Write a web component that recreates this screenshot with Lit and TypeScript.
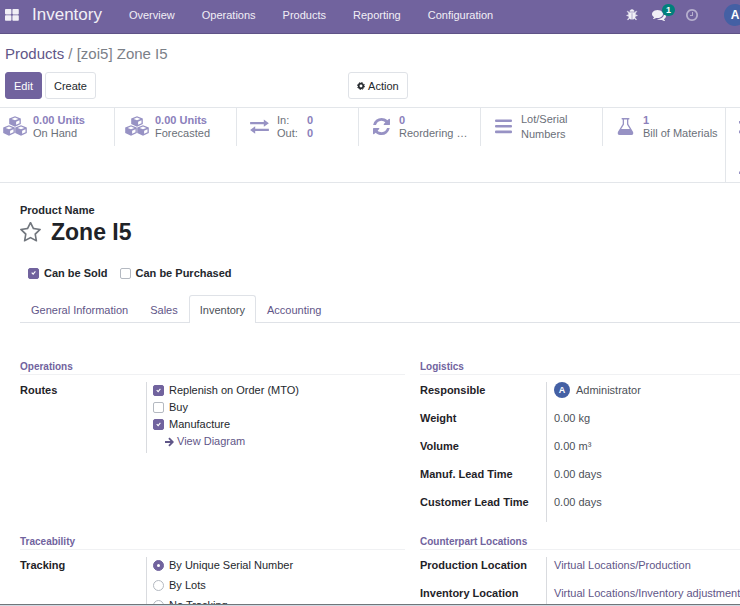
import { LitElement, html, css, svg, nothing } from "lit";
import { customElement, property, state } from "lit/decorators.js";

const icons = {
  bug: {
    box: "0 0 1792 1792",
    art: svg`<path d="M1696 960q0 26-19 45t-45 19h-224q0 171-67 290l208 209q19 19 19 45t-19 45q-18 19-45 19t-45-19l-198-197q-5 5-15 13t-42 28.5-65 36.5-82 29-97 13v-896h-128v896q-51 0-101.5-13.5t-87-33-66-39-43.5-32.5l-15-14-183 207q-20 21-48 21-24 0-43-16-19-18-20.5-44.5t15.5-46.5l202-227q-58-114-58-274h-224q-26 0-45-19t-19-45 19-45 45-19h224v-294l-173-173q-19-19-19-45t19-45 45-19 45 19l173 173h844l173-173q19-19 45-19t45 19 19 45-19 45l-173 173v294h224q26 0 45 19t19 45zm-480-576h-640q0-133 93.5-226.5t226.5-93.5 226.5 93.5 93.5 226.5z" stroke="currentColor" stroke-width="70"/>`,
  },
  chat: {
    box: "0 0 1792 1792",
    art: svg`<path d="M1408 768q0 139-94 257t-256.5 186.5-353.5 68.5q-86 0-176-16-124 88-278 128-36 9-86 16h-3q-11 0-20.5-8t-11.5-21q-1-3-1-6.5t.5-6.5 2-6l2.5-5 3.5-5.5 4-5 4.5-5 4-4.5q5-6 23-25t26-29.5 22.5-29 25-38.5 20.5-44q-124-72-195-177t-71-224q0-139 94-257t256.5-186.5 353.5-68.5 353.5 68.5 256.5 186.5 94 257zm384 256q0 120-71 224.5t-195 176.5q10 24 20.5 44t25 38.5 22.5 29 26 29.5 23 25q1 1 4 4.5t4.5 5 4 5 3.5 5.5l2.5 5 2 6 .5 6.5-1 6.5q-3 14-13 22t-22 7q-50-7-86-16-154-40-278-128-90 16-176 16-271 0-472-132 58 4 88 4 161 0 309-45t264-129q125-92 192-212t67-254q0-77-23-152 129 71 204 178t75 230z"/>`,
  },
  clock: {
    box: "128 128 1536 1536",
    art: svg`<path d="M1024 544v448q0 14-9 23t-23 9h-320q-14 0-23-9t-9-23v-64q0-14 9-23t23-9h224v-352q0-14 9-23t23-9h64q14 0 23 9t9 23zm416 352q0-148-73-273t-198-198-273-73-273 73-198 198-73 273 73 273 198 198 273 73 273-73 198-198 73-273zm224 0q0 209-103 385.5t-279.5 279.5-385.5 103-385.5-103-279.5-279.5-103-385.5 103-385.5 279.5-279.5 385.5-103 385.5 103 279.5 279.5 103 385.5z"/>`,
  },
  star: {
    box: "64 96 1664 1600",
    art: svg`<path d="M1201 1004l306-297-422-62-189-382-189 382-422 62 306 297-73 421 378-199 377 199zm527-357q0 22-26 48l-363 354 86 500q1 7 1 20 0 50-41 50-19 0-40-12l-449-236-449 236q-22 12-40 12-21 0-31.5-14.5t-10.5-35.5q0-6 2-20l86-500-364-354q-25-27-25-48 0-37 56-46l502-73 225-455q19-41 49-41t49 41l225 455 502 73q56 9 56 46z"/>`,
  },
  refresh: {
    box: "0 128 1536 1536",
    art: svg`<path d="M1511 1056q0 5-1 7-64 268-268 434.5t-478 166.5q-146 0-282.5-55t-243.5-157l-129 129q-19 19-45 19t-45-19-19-45v-448q0-26 19-45t45-19h448q26 0 45 19t19 45-19 45l-137 137q71 66 161 102t187 36q134 0 250-65t186-179q11-17 53-117 8-23 30-23h192q13 0 22.5 9.5t9.5 22.5zm25-800v448q0 26-19 45t-45 19h-448q-26 0-45-19t-19-45 19-45l138-138q-148-137-349-137-134 0-250 65t-186 179q-11 17-53 117-8 23-30 23h-199q-13 0-22.5-9.5t-9.5-22.5v-7q65-268 270-434.5t480-166.5q146 0 284 55.5t245 156.5l130-129q19-19 45-19t45 19 19 45z"/>`,
  },
  apps: {
    box: "0 0 14 12",
    art: svg`<rect width="6.4" height="5.4" rx=".8"/><rect x="7.4" width="6.4" height="5.4" rx=".8"/><rect y="6.3" width="6.4" height="5.4" rx=".8"/><rect x="7.4" y="6.3" width="6.4" height="5.4" rx=".8"/>`,
  },
  cubes: {
    box: "0 0 24 20",
    art: svg`${[[6.2, 0.2], [0.2, 9.2], [12.2, 9.2]].map(
      ([x, y]) => svg`<g transform="translate(${x} ${y})"><path fill-rule="evenodd" d="M5.8 0 L11.6 2.3 V7.9 L5.8 10.6 L0 7.9 V2.3 Z M5.8 1.3 L2.4 2.7 L5.8 4.1 L9.2 2.7 Z M6.9 5.5 V8.6 L10.3 7 V4 Z"/></g>`)}`,
  },
  exchange: {
    box: "0 0 20 16",
    art: svg`<path d="M0 3.1H14.6V0.4L20 4.4L14.6 8.2V5.7H0Z M20 10.3H5.4V7.8L0 11.8L5.4 15.6V12.9H20Z"/>`,
  },
  bars: {
    box: "0 0 17 15",
    art: svg`<rect y=".5" width="17" height="2.6" rx="1"/><rect y="6" width="17" height="2.6" rx="1"/><rect y="11.6" width="17" height="2.6" rx="1"/>`,
  },
  flask: {
    box: "0 0 16 17",
    art: svg`<path fill-rule="evenodd" d="M4.6 0H11.4Q12 .1 12 .7T11.4 1.4H10.8V6L15.6 14Q16.3 16.8 14 17H2Q-.3 16.8 .4 14L5.2 6V1.4H4.6Q4 1.3 4 .7T4.6 0Z M6.5 1.4V6.4L3.7 11H12.3L9.5 6.4V1.4Z"/>`,
  },
  cog: {
    box: "0 0 16 16",
    art: svg`<g fill="none" stroke="currentColor"><circle cx="8" cy="8" r="4.6" stroke-width="3.4"/><circle cx="8" cy="8" r="7" stroke-width="2" stroke-dasharray="2.75 2.75"/></g>`,
  },
  arrow: {
    box: "0 0 10 10",
    art: svg`<path fill="none" stroke="currentColor" stroke-width="2" d="M0 5H8.4M4.4 .8L8.6 5L4.4 9.2"/>`,
  },
  shuffle: {
    box: "0 0 18 60",
    art: svg`<path d="M0 5H18V7.6H0Z M0 14.6H18V17.2H0Z M0 56L4 52H18V58H0Z"/>`,
  },
};

type IconName = keyof typeof icons;

const icon = (name: IconName, cls = "") => html`<svg
  class="icon ${cls}" viewBox=${icons[name].box} fill="currentColor" aria-hidden="true"
>${icons[name].art}</svg>`;

const shared = css`
  * { box-sizing: border-box; }
  button { font: inherit; color: inherit; background: none; border: 0; padding: 0; cursor: pointer; }
  a { color: #5f5688; text-decoration: none; }
  .icon { display: block; flex: none; }
`;

@customElement("nav-bar")
export class NavBar extends LitElement {
  static styles = [shared, css`
    :host { display: block; }
    .bar {
      display: flex; align-items: center; height: 34px; padding: 0 5px 4px;
      background: #71639e; border-bottom: 1px solid #5f5387; color: #f1eff6; overflow: hidden;
    }
    .apps .icon { width: 14px; height: 12px; }
    .brand { margin: 0 27px 0 13px; font-size: 17px; line-height: 20px; color: #f1eff6; }
    .menu { display: flex; gap: 27px; }
    .menu a { color: #f1eff6; line-height: 16px; }
    .tray { display: flex; align-items: center; margin: 0 -11px 0 auto; flex: none; }
    .bug .icon { width: 12px; height: 12px; }
    .chat { position: relative; margin: 0 20px 0 14px; }
    .chat .icon { width: 14px; height: 14px; }
    .badge {
      position: absolute; left: 10px; top: -4px; min-width: 13px; height: 12px; border-radius: 6px;
      background: #00807b; color: #fff; font-size: 9px; font-weight: bold; line-height: 12px; text-align: center;
    }
    .clock .icon { width: 12px; height: 12px; opacity: 0.55; }
    .clock { margin-right: 26px; }
    .avatar {
      width: 22px; height: 22px; border-radius: 50%; background: #4460a4; color: #fff;
      font-size: 12px; font-weight: bold; line-height: 22px; text-align: center;
    }
  `];

  render() {
    return html`<header class="bar">
      <button class="apps" aria-label="Apps">${icon("apps")}</button>
      <a class="brand" href="#">Inventory</a>
      <nav class="menu">
        ${["Overview", "Operations", "Products", "Reporting", "Configuration"].map(
          (label) => html`<a href="#">${label}</a>`)}
      </nav>
      <div class="tray">
        <button class="bug" aria-label="Debug">${icon("bug")}</button>
        <button class="chat" aria-label="Messages">${icon("chat")}<span class="badge">1</span></button>
        <button class="clock" aria-label="Activities">${icon("clock")}</button>
        <button class="avatar">A</button>
      </div>
    </header>`;
  }
}

@customElement("stat-bar")
export class StatBar extends LitElement {
  static styles = [shared, css`
    :host { display: block; overflow: hidden; border: solid #e3e6ea; border-width: 1px 0; }
    .row { display: flex; height: 74px; margin-left: -7px; }
    .stat {
      display: flex; align-items: center; flex: 0 0 122px; height: 38px; padding-left: 10px;
      border-right: 1px solid #e3e6ea; color: #6b7079; text-align: left; line-height: 13px;
    }
    .stat:nth-child(6) { border-right: 0; }
    .pic { display: flex; justify-content: center; width: 24px; margin-right: 6px; padding-bottom: 2px; color: #9792c4; }
    .cubes { width: 24px; height: 20px; }
    .exchange { width: 19px; height: 15px; }
    .refresh, .flask { width: 17px; height: 17px; }
    .bars { width: 17px; height: 15px; }
    .num { display: block; font-weight: bold; color: #8b80bb; }
    .text { display: block; white-space: nowrap; }
    .tall { line-height: 15px; }
    .pair { display: grid; grid-template-columns: 30px auto; }
    .more { flex: 1 0 24px; display: flex; padding: 8px 0 0 13px; border-left: 1px solid #e3e6ea; color: #9792c4; }
    .shuffle { width: 18px; height: 60px; }
  `];

  private stat(name: IconName, body: unknown) {
    return html`<button class="stat"><span class="pic">${icon(name, name)}</span>${body}</button>`;
  }

  private text(num: string, label: string) {
    return html`<span class="text"><b class="num">${num}</b>${label}</span>`;
  }

  render() {
    return html`<div class="row">
      ${this.stat("cubes", this.text("0.00 Units", "On Hand"))}
      ${this.stat("cubes", this.text("0.00 Units", "Forecasted"))}
      ${this.stat("exchange", html`<span class="pair">
        <span>In:</span><b class="num">0</b><span>Out:</span><b class="num">0</b></span>`)}
      ${this.stat("refresh", this.text("0", "Reordering …"))}
      ${this.stat("bars", html`<span class="text tall">Lot/Serial<br>Numbers</span>`)}
      ${this.stat("flask", this.text("1", "Bill of Materials"))}
      <button class="more" aria-label="More">${icon("shuffle", "shuffle")}</button>
    </div>`;
  }
}

@customElement("tick-option")
export class TickOption extends LitElement {
  @property() label = "";
  @property() kind: "checkbox" | "radio" = "checkbox";
  @property() group = "";
  @property({ type: Boolean }) on = false;

  static styles = [shared, css`
    :host { display: block; }
    label { display: flex; align-items: center; gap: 5px; line-height: inherit; white-space: nowrap; }
    input {
      appearance: none; flex: none; display: grid; place-items: center; width: 11px; height: 11px; margin: 0;
      border: 1px solid #b4b9c1; border-radius: 2px; background: #fff;
    }
    input[type="radio"] { border-radius: 50%; }
    input:checked { border-color: #71639e; background: #71639e; }
    input:checked::before { content: ""; width: 3px; height: 3px; border-radius: 50%; background: #fff; }
    input[type="checkbox"]:checked::before {
      width: 5px; height: 5px; border-radius: 0;
      clip-path: polygon(6% 48%, 22% 34%, 42% 54%, 80% 10%, 96% 26%, 44% 90%);
    }
  `];

  render() {
    return html`<label><input type=${this.kind} name=${this.group || nothing} .checked=${this.on}>
      <span>${this.label}</span></label>`;
  }
}

@customElement("field-group")
export class FieldGroup extends LitElement {
  @property() heading = "";
  @property({ attribute: false }) rows: { label: string; value: unknown }[] = [];

  static styles = [shared, css`
    :host { display: block; }
    h2 {
      margin: 0 0 7px; font-size: 10px; line-height: 14px; color: #71639e;
      border-bottom: 1px solid #f0f1f3;
    }
    dl { display: grid; grid-template-columns: 126px 1fr; margin: 0; line-height: 16px; }
    dt { font-weight: bold; color: #1f2328; white-space: nowrap; }
    dd { min-height: 28px; margin: 0; padding-left: 7px; border-left: 1px solid #d9dbdf; color: #4c5057; white-space: nowrap; }
    .person { display: flex; align-items: center; gap: 6px; }
    .face {
      width: 16px; height: 16px; border-radius: 50%; background: #4460a4; color: #fff;
      font-size: 9px; font-weight: bold; text-align: center;
    }
    .options { display: grid; line-height: 17px; color: #24282d; padding-bottom: 3px; margin-left: -1px; }
    .radios { gap: 4px; line-height: 16px; }
    .go { display: flex; align-items: center; gap: 3px; margin-left: 12px; }
    .go .icon { width: 9px; height: 10px; }
  `];

  render() {
    return html`<h2>${this.heading}</h2>
      <dl>${this.rows.map((r) => html`<dt>${r.label}</dt><dd>${r.value}</dd>`)}</dl>`;
  }
}

@customElement("app-root")
export class AppRoot extends LitElement {
  @state() private tab = "Inventory";

  static styles = [shared, css`
    :host {
      display: flex; flex-direction: column; height: 100vh; overflow: hidden; background: #fff;
      font-family: "Liberation Sans", Arial, sans-serif; font-size: 11px; color: #24282d;
    }
    .head { padding: 10px 5px 8px; flex: none; }
    .crumbs { font-size: 15px; line-height: 19px; color: #7b8088; margin-bottom: 9px; }
    .tools { display: grid; grid-template-columns: 47% 1fr; }
    .set { display: flex; gap: 3px; }
    .btn {
      display: flex; align-items: center; gap: 3px; height: 27px; padding: 0 8px;
      border: 1px solid #dfe2e7; border-radius: 3px; background: #fff;
    }
    .primary { background: #71639e; border-color: #71639e; color: #fff; }
    .btn .icon { width: 8px; height: 8px; }
    nav-bar, stat-bar { flex: none; }
    .sheet { flex: 1; min-height: 0; overflow: hidden; padding: 20px 0 0 20px; }
    .caption { font-weight: bold; line-height: 14px; }
    .title { display: flex; align-items: center; gap: 10px; height: 30px; color: #1f2328; }
    .title .icon { width: 21px; height: 21px; color: #71767d; }
    h1 { margin: 0; font-size: 23px; line-height: 30px; }
    .flags { display: flex; gap: 12px; margin: 18px 0 14px 8px; font-weight: bold; line-height: 16px; }
    .tabs { display: flex; height: 28px; border-bottom: 1px solid #dfe2e7; }
    .tab {
      height: 28px; padding: 0 10px; border: 1px solid transparent; border-bottom: 0;
      border-radius: 3px 3px 0 0; color: #5f5688;
    }
    .tab[aria-selected="true"] { border-color: #dfe2e7; background: #fff; color: #4c5057; }
    .groups {
      display: grid; grid-template-columns: repeat(2, minmax(385px, 1fr)); gap: 13px 15px; padding-top: 37px;
    }
    .edge { flex: none; height: 2px; background: #cfd9e2; border-top: 1px solid #70757a; }
  `];

  private logistics = [
    { label: "Responsible", value: html`<span class="person"><span class="face">A</span>Administrator</span>` },
    { label: "Weight", value: "0.00 kg" },
    { label: "Volume", value: "0.00 m³" },
    { label: "Manuf. Lead Time", value: "0.00 days" },
    { label: "Customer Lead Time", value: "0.00 days" },
  ];

  private routes = [{
    label: "Routes",
    value: html`<div class="options">
      <tick-option label="Replenish on Order (MTO)" on></tick-option>
      <tick-option label="Buy"></tick-option>
      <tick-option label="Manufacture" on></tick-option>
      <a class="go" href="#">${icon("arrow")}View Diagram</a>
    </div>`,
  }];

  private tracking = [{
    label: "Tracking",
    value: html`<div class="options radios" role="radiogroup" aria-label="Tracking">
      <tick-option kind="radio" group="tracking" label="By Unique Serial Number" on></tick-option>
      <tick-option kind="radio" group="tracking" label="By Lots"></tick-option>
      <tick-option kind="radio" group="tracking" label="No Tracking"></tick-option>
    </div>`,
  }];

  private locations = [
    { label: "Production Location", value: html`<a href="#">Virtual Locations/Production</a>` },
    { label: "Inventory Location", value: html`<a href="#">Virtual Locations/Inventory adjustment</a>` },
  ];

  render() {
    return html`
      <nav-bar></nav-bar>
      <div class="head">
        <div class="crumbs"><a href="#">Products</a> / [zoi5] Zone I5</div>
        <div class="tools">
          <div class="set"><button class="btn primary">Edit</button><button class="btn">Create</button></div>
          <div class="set"><button class="btn">${icon("cog")}Action</button></div>
        </div>
      </div>
      <stat-bar></stat-bar>
      <main class="sheet">
        <div class="caption">Product Name</div>
        <div class="title"><button aria-label="Favorite">${icon("star")}</button><h1>Zone I5</h1></div>
        <div class="flags">
          <tick-option label="Can be Sold" on></tick-option>
          <tick-option label="Can be Purchased"></tick-option>
        </div>
        <div class="tabs" role="tablist">
          ${["General Information", "Sales", "Inventory", "Accounting"].map((t) => html`<button
            class="tab" role="tab" aria-selected=${t === this.tab ? "true" : "false"}
            @click=${() => (this.tab = t)}>${t}</button>`)}
        </div>
        <div class="groups">
          <field-group heading="Operations" .rows=${this.routes}></field-group>
          <field-group heading="Logistics" .rows=${this.logistics}></field-group>
          <field-group heading="Traceability" .rows=${this.tracking}></field-group>
          <field-group heading="Counterpart Locations" .rows=${this.locations}></field-group>
        </div>
      </main>
      <div class="edge"></div>`;
  }
}
